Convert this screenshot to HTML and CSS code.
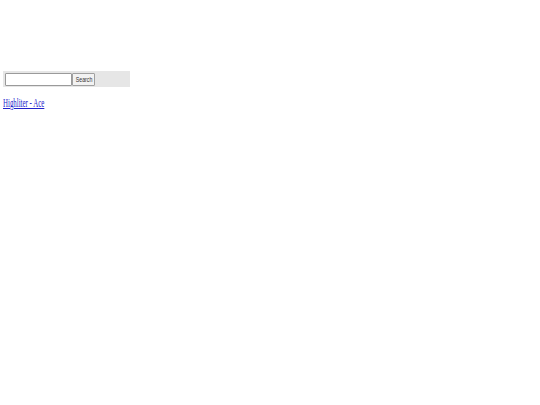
FILE: index.html
```html
<!DOCTYPE html>
<html>
<head>
<meta charset="utf-8">
<link rel="stylesheet" href="styles.css">
</head>
<body>
<div class="page">
  <form class="searchbar">
    <input class="field" type="text">
    <button class="btn" type="button"><span class="btn-label">Search</span></button>
  </form>
  <p class="links"><a class="link" href="#">Highliter - Ace</a></p>
</div>
</body>
</html>
```
FILE: styles.css
```css
html, body {
  margin: 0;
  padding: 0;
  background: #ffffff;
}
.page {
  padding-top: 71px;
  padding-left: 3px;
  font-family: "Liberation Serif", serif;
}
.searchbar {
  display: flex;
  align-items: center;
  width: 127px;
  height: 16px;
  margin: 0;
  padding-left: 2px;
  box-sizing: border-box;
  background: #e6e6e6;
}
.field {
  width: 67px;
  height: 13px;
  box-sizing: border-box;
  margin: 0;
  padding: 0;
  border: 1px solid #9a9a9a;
  border-radius: 1px;
  background: #fff;
}
.btn {
  width: 23px;
  height: 13px;
  box-sizing: border-box;
  margin: 0;
  padding: 0;
  border: 1px solid #a0a0a0;
  border-radius: 1px;
  background: #f2f2f2;
  font-family: "Liberation Sans", sans-serif;
  font-size: 7px;
  color: #333;
  line-height: 1;
  overflow: hidden;
}
.btn-label {
  display: inline-block;
  transform: scaleX(0.75);
}
.links {
  margin: 9px 0 0 0;
  font-size: 13px;
  line-height: 14px;
}
.link {
  display: inline-block;
  color: #2222cc;
  text-decoration: underline;
  transform: scaleX(0.53);
  transform-origin: left center;
}
```
